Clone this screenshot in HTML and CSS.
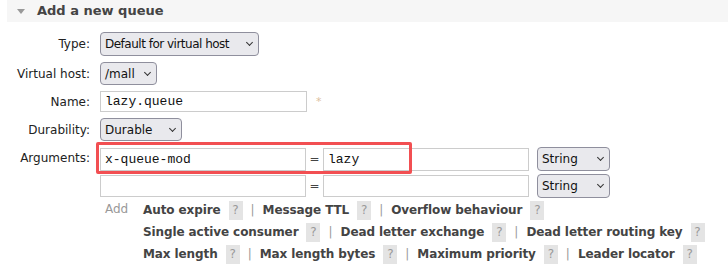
FILE: index.html
```html
<!DOCTYPE html>
<html>
<head>
  <meta charset="UTF-8">
  <title>Add a new queue</title>
  <link rel="stylesheet" href="styles.css">
</head>
<body>
<div class="section">
  <div class="section-head"><span class="toggle"></span>Add a new queue</div>

  <div class="form">
    <div class="row">
      <label>Type:</label>
      <div class="field"><span class="select sel-type">Default for virtual host<span class="chev"></span></span></div>
    </div>
    <div class="row">
      <label>Virtual host:</label>
      <div class="field"><span class="select sel-vhost">/mall<span class="chev"></span></span></div>
    </div>
    <div class="row">
      <label>Name:</label>
      <div class="field"><span class="input name">lazy.queue</span><span class="mand">*</span></div>
    </div>
    <div class="row">
      <label>Durability:</label>
      <div class="field"><span class="select sel-dur">Durable<span class="chev"></span></span></div>
    </div>
    <div class="row args-row">
      <label>Arguments:</label>
      <div class="field args">
        <div class="arg">
          <span class="input key">x-queue-mod</span><span class="eq">=</span><span class="input val">lazy</span><span class="select sel-str">String<span class="chev"></span></span>
        </div>
        <div class="arg">
          <span class="input key short"></span><span class="eq">=</span><span class="input val short"></span><span class="select sel-str">String<span class="chev"></span></span>
        </div>
        <div class="mark"></div>
      </div>
    </div>
    <div class="helpers">
      <span class="add">Add</span>
      <div class="links">
        <div class="line">
          <b>Auto expire</b><span class="help">?</span><span class="sep">|</span>
          <b>Message TTL</b><span class="help">?</span><span class="sep">|</span>
          <b>Overflow behaviour</b><span class="help">?</span>
        </div>
        <div class="line">
          <b>Single active consumer</b><span class="help">?</span><span class="sep">|</span>
          <b>Dead letter exchange</b><span class="help">?</span><span class="sep">|</span>
          <b>Dead letter routing key</b><span class="help">?</span>
        </div>
        <div class="line">
          <b>Max length</b><span class="help">?</span><span class="sep">|</span>
          <b>Max length bytes</b><span class="help">?</span><span class="sep">|</span>
          <b>Maximum priority</b><span class="help">?</span><span class="sep">|</span>
          <b>Leader locator</b><span class="help">?</span>
        </div>
      </div>
    </div>
  </div>
</div>
</body>
</html>
```

FILE: styles.css
```css
body {
  margin: 0;
  font-family: "DejaVu Sans", Verdana, sans-serif;
  font-size: 12px;
  color: #222;
  background: #fff;
}
.section {
  padding-left: 7px;
}
.section-head {
  background: #f6f6f6;
  height: 22px;
  line-height: 22px;
  font-weight: bold;
  font-size: 13px;
  color: #444;
  display: flex;
  align-items: center;
}
.toggle {
  width: 0;
  height: 0;
  border-left: 4px solid transparent;
  border-right: 4px solid transparent;
  border-top: 5px solid #999;
  margin: 0 12px 0 10px;
}
.form {
  padding-top: 10px;
}
.row {
  display: flex;
  align-items: center;
  margin-bottom: 6px;
}
.row label {
  width: 83px;
  text-align: right;
  padding-right: 10px;
  font-size: 12px;
  color: #222;
  flex-shrink: 0;
}
.args-row {
  align-items: flex-start;
  margin-bottom: 0;
}
.args-row label {
  line-height: 23px;
}
.field {
  display: flex;
  align-items: center;
}
.select {
  display: inline-flex;
  align-items: center;
  justify-content: space-between;
  height: 23px;
  box-sizing: border-box;
  padding: 0 6px 0 4px;
  border: 1px solid #8f8f9d;
  border-radius: 4px;
  background: #e9e9ed;
  font-size: 12px;
  color: #111;
  white-space: nowrap;
}
.chev {
  width: 4px;
  height: 4px;
  border-right: 1.3px solid #333;
  border-bottom: 1.3px solid #333;
  transform: rotate(45deg);
  margin: -3px 0 0 8px;
  flex-shrink: 0;
}
.sel-type { width: 159px; height: 24px; letter-spacing: -0.5px; }
.sel-vhost { width: 57px; }
.sel-dur { width: 82px; }
.sel-str { width: 73px; height: 24px; margin-left: 8px; }
.input {
  display: inline-block;
  box-sizing: border-box;
  height: 23px;
  line-height: 21px;
  border: 1px solid #ccc;
  padding: 0 4px;
  font-family: "Liberation Mono", "Courier New", monospace;
  font-size: 13px;
  color: #111;
}
.name { width: 207px; height: 21px; line-height: 19px; }
.mand {
  color: #dcc0a0;
  margin-left: 9px;
  font-size: 11px;
}
.args {
  flex-direction: column;
  align-items: flex-start;
  position: relative;
}
.arg {
  display: flex;
  align-items: center;
}
.arg + .arg {
  margin-top: 3px;
}
.key { width: 206px; }
.val { width: 206px; }
.short { height: 22px; }
.eq {
  width: 17px;
  text-align: center;
  color: #444;
}
.mark {
  position: absolute;
  left: -4px;
  top: -5px;
  width: 310px;
  height: 26px;
  border: 3px solid #f24f52;
  border-radius: 2px;
}
.helpers {
  display: flex;
  align-items: flex-start;
  margin-top: 1px;
}
.add {
  width: 31px;
  padding-left: 98px;
  color: #999;
  line-height: 20px;
  font-size: 12px;
  flex-shrink: 0;
}
.links {
  padding-left: 7px;
}
.line {
  display: flex;
  align-items: center;
  height: 22px;
  color: #444;
}
.line b {
  font-size: 12px;
  letter-spacing: -0.1px;
}
.help {
  display: inline-block;
  width: 14px;
  height: 19px;
  line-height: 19px;
  text-align: center;
  background: #e4e4e4;
  color: #999;
  margin-left: 8px;
}
.sep {
  color: #999;
  margin: 0 8px;
}
```
